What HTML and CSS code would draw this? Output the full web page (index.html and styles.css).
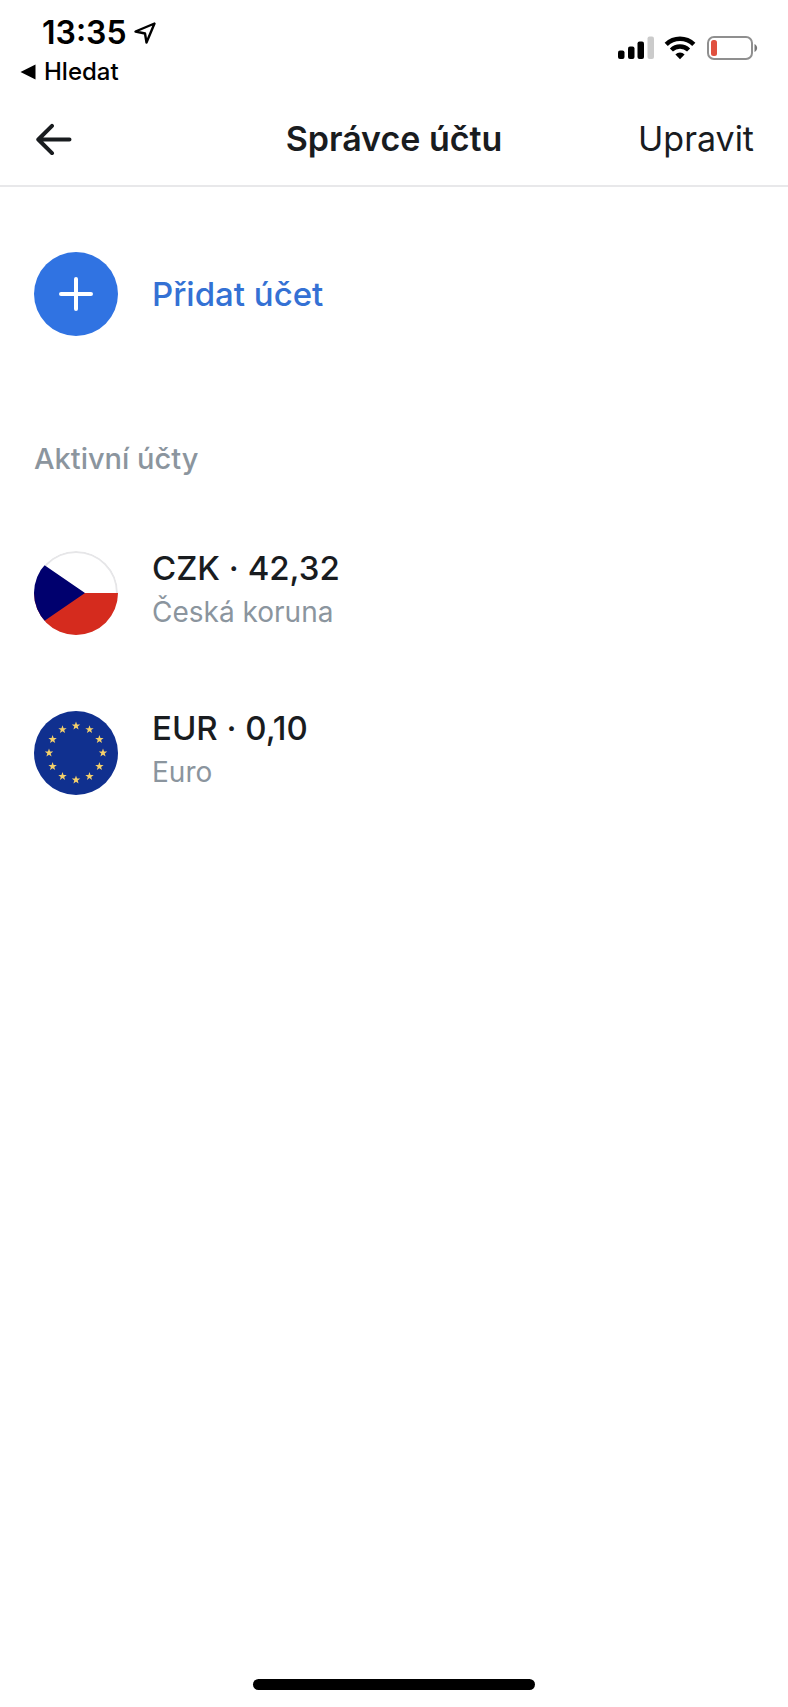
FILE: index.html
```html
<!DOCTYPE html>
<html lang="cs">
<head>
<meta charset="utf-8">
<meta name="viewport" content="width=device-width, initial-scale=1">
<title>Správce účtu</title>
<link rel="stylesheet" href="styles.css">
</head>
<body>
<div class="screen">
  <div class="status">
    <div class="status-left">
      <div class="clock">
        <span>13:35</span>
        <svg width="24" height="24" viewBox="0 0 24 24" aria-hidden="true"><path d="M21.500 2.500 2.500 10.500 12 12.500 13.500 21.500Z" fill="none" stroke="#000" stroke-width="2.400" stroke-linejoin="round"/></svg>
      </div>
      <a class="return" href="#">
        <svg width="16" height="16" viewBox="0 0 16 16" aria-hidden="true"><path d="M0.500 8 15.500 0.500V15.500Z"/></svg>
        <span>Hledat</span>
      </a>
    </div>
    <div class="status-right">
      <svg width="36" height="24" viewBox="0 0 36 24" aria-hidden="true">
        <rect x="0" y="14.500" width="6.500" height="8.500" rx="2"/>
        <rect x="10" y="10.500" width="6.500" height="12.500" rx="2"/>
        <rect x="19.500" y="5.500" width="6.500" height="17.500" rx="2"/>
        <rect x="29.500" y="0.500" width="6.500" height="22.500" rx="2" fill="#cbcbcb"/>
      </svg>
      <svg width="32" height="24" viewBox="0 0 32 24" aria-hidden="true">
        <path d="M2.200 8.300A20 20 0 0 1 29.800 8.300" fill="none" stroke="#000" stroke-width="4.600"/>
        <path d="M7.400 14A12.300 12.300 0 0 1 24.600 14" fill="none" stroke="#000" stroke-width="4.400"/>
        <path d="M16 23.300 11.400 18.500A6.500 6.500 0 0 1 20.600 18.500Z"/>
      </svg>
      <svg width="52" height="24" viewBox="0 0 52 24" aria-hidden="true">
        <rect x="2" y="1" width="44" height="22" rx="6" fill="none" stroke="#8f8f8f" stroke-width="2"/>
        <rect x="5" y="4" width="6" height="16" rx="2.500" fill="#e0503f"/>
        <path d="M48.500 8C52 9.500 52 14.500 48.500 16Z" fill="#777"/>
      </svg>
    </div>
  </div>

  <header class="header">
    <button class="back" type="button" aria-label="Zpět">
      <svg width="38" height="32" viewBox="0 0 38 32" aria-hidden="true"><path d="M35.500 16.500H4.500M18 2.800 4.300 16.500 18 30.200" fill="none" stroke="#191c1f" stroke-width="4" stroke-linecap="round" stroke-linejoin="round"/></svg>
    </button>
    <h1 class="title">Správce účtu</h1>
    <button class="edit" type="button">Upravit</button>
  </header>

  <main class="content">
    <button class="row add" type="button">
      <svg class="badge" viewBox="0 0 84 84" aria-hidden="true"><circle cx="42" cy="42" r="42" fill="#3073e2"/><path d="M42 27V57M27 42H57" stroke="#fff" stroke-width="4" stroke-linecap="round"/></svg>
      <span>Přidat účet</span>
    </button>

    <h2 class="section">Aktivní účty</h2>

    <ul class="accounts">
      <li class="row">
        <svg class="badge" viewBox="0 0 84 84" aria-hidden="true">
          <defs><clipPath id="disc"><circle cx="42" cy="42" r="42"/></clipPath></defs>
          <g clip-path="url(#disc)">
            <rect width="84" height="84" fill="#fff"/>
            <circle cx="42" cy="42" r="41" fill="none" stroke="#e6e6e8" stroke-width="2"/>
            <rect y="42" width="84" height="42" fill="#d52b1e"/>
            <path d="M-12 7 0 7 51 42 0 77H-12V7ZM0 7V77Z" fill="#00006e"/>
          </g>
        </svg>
        <div class="account"><strong class="balance">CZK · 42,32</strong><span class="currency">Česká koruna</span></div>
      </li>
      <li class="row">
        <svg class="badge" viewBox="0 0 84 84" aria-hidden="true">
          <defs><path id="star" d="M0-4.400 1.050-1.400H4.200L1.700.500 2.600 3.500 0 1.700-2.600 3.500-1.700.500-4.200-1.400H-1.050Z" fill="#f5d06a"/></defs>
          <circle cx="42" cy="42" r="42" fill="#10308f"/>
          <use href="#star" x="42" y="15"/><use href="#star" x="55.500" y="18.600"/><use href="#star" x="65.400" y="28.500"/>
          <use href="#star" x="69" y="42"/><use href="#star" x="65.400" y="55.500"/><use href="#star" x="55.500" y="65.400"/>
          <use href="#star" x="42" y="69"/><use href="#star" x="28.500" y="65.400"/><use href="#star" x="18.600" y="55.500"/>
          <use href="#star" x="15" y="42"/><use href="#star" x="18.600" y="28.500"/><use href="#star" x="28.500" y="18.600"/>
        </svg>
        <div class="account"><strong class="balance">EUR · 0,10</strong><span class="currency">Euro</span></div>
      </li>
    </ul>
  </main>

  <div class="home"></div>
</div>
</body>
</html>
```
FILE: styles.css
```css
* {
  box-sizing: border-box;
}

body {
  margin: 0;
  background: #fff;
  color: #191c1f;
  font-family: Inter, "Liberation Sans", sans-serif;
}

button {
  padding: 0;
  border: 0;
  background: none;
  color: inherit;
  font: inherit;
  cursor: pointer;
}

svg {
  display: block;
  flex: none;
}

.screen {
  display: flex;
  flex-direction: column;
  min-height: 100vh;
}

.status {
  display: flex;
  justify-content: space-between;
  padding: 14px 30px 0 20px;
  color: #000;
}

.clock {
  display: flex;
  align-items: center;
  gap: 6px;
  padding-left: 22px;
  font-size: 32px;
  font-weight: 600;
  line-height: 38px;
}

.return {
  display: flex;
  align-items: center;
  gap: 8px;
  color: #000;
  font-size: 24px;
  font-weight: 500;
  line-height: 40px;
  text-decoration: none;
}

.status-right {
  display: flex;
  align-items: flex-start;
  gap: 10px;
  padding-top: 22px;
}

.header {
  display: grid;
  grid-template-columns: 1fr auto 1fr;
  align-items: center;
  height: 95px;
  padding: 0 34px;
  border-bottom: 2px solid #e8e8ea;
}

.back {
  justify-self: start;
}

.title {
  margin: 0;
  font-size: 34px;
  font-weight: 600;
  line-height: 44px;
}

.edit {
  justify-self: end;
  font-size: 34px;
  line-height: 44px;
}

.content {
  flex: 1;
  padding: 65px 34px 0;
}

.row {
  display: flex;
  align-items: center;
  gap: 34px;
}

.badge {
  width: 84px;
  height: 84px;
}

.add {
  color: #3471d4;
  font-size: 33px;
  font-weight: 500;
}

.section {
  margin: 104px 0 0;
  color: #8b959e;
  font-size: 29px;
  font-weight: 500;
  line-height: 38px;
}

.accounts {
  display: grid;
  gap: 66px;
  margin: 68px 0 0;
  padding: 0;
  list-style: none;
}

.account {
  display: flex;
  flex-direction: column;
  padding-bottom: 6px;
  line-height: 44px;
}

.balance {
  font-size: 33px;
  font-weight: 500;
}

.currency {
  color: #8b959e;
  font-size: 28px;
}

.home {
  align-self: center;
  width: 282px;
  height: 11px;
  margin-bottom: 17px;
  border-radius: 6px;
  background: #000;
}
```
